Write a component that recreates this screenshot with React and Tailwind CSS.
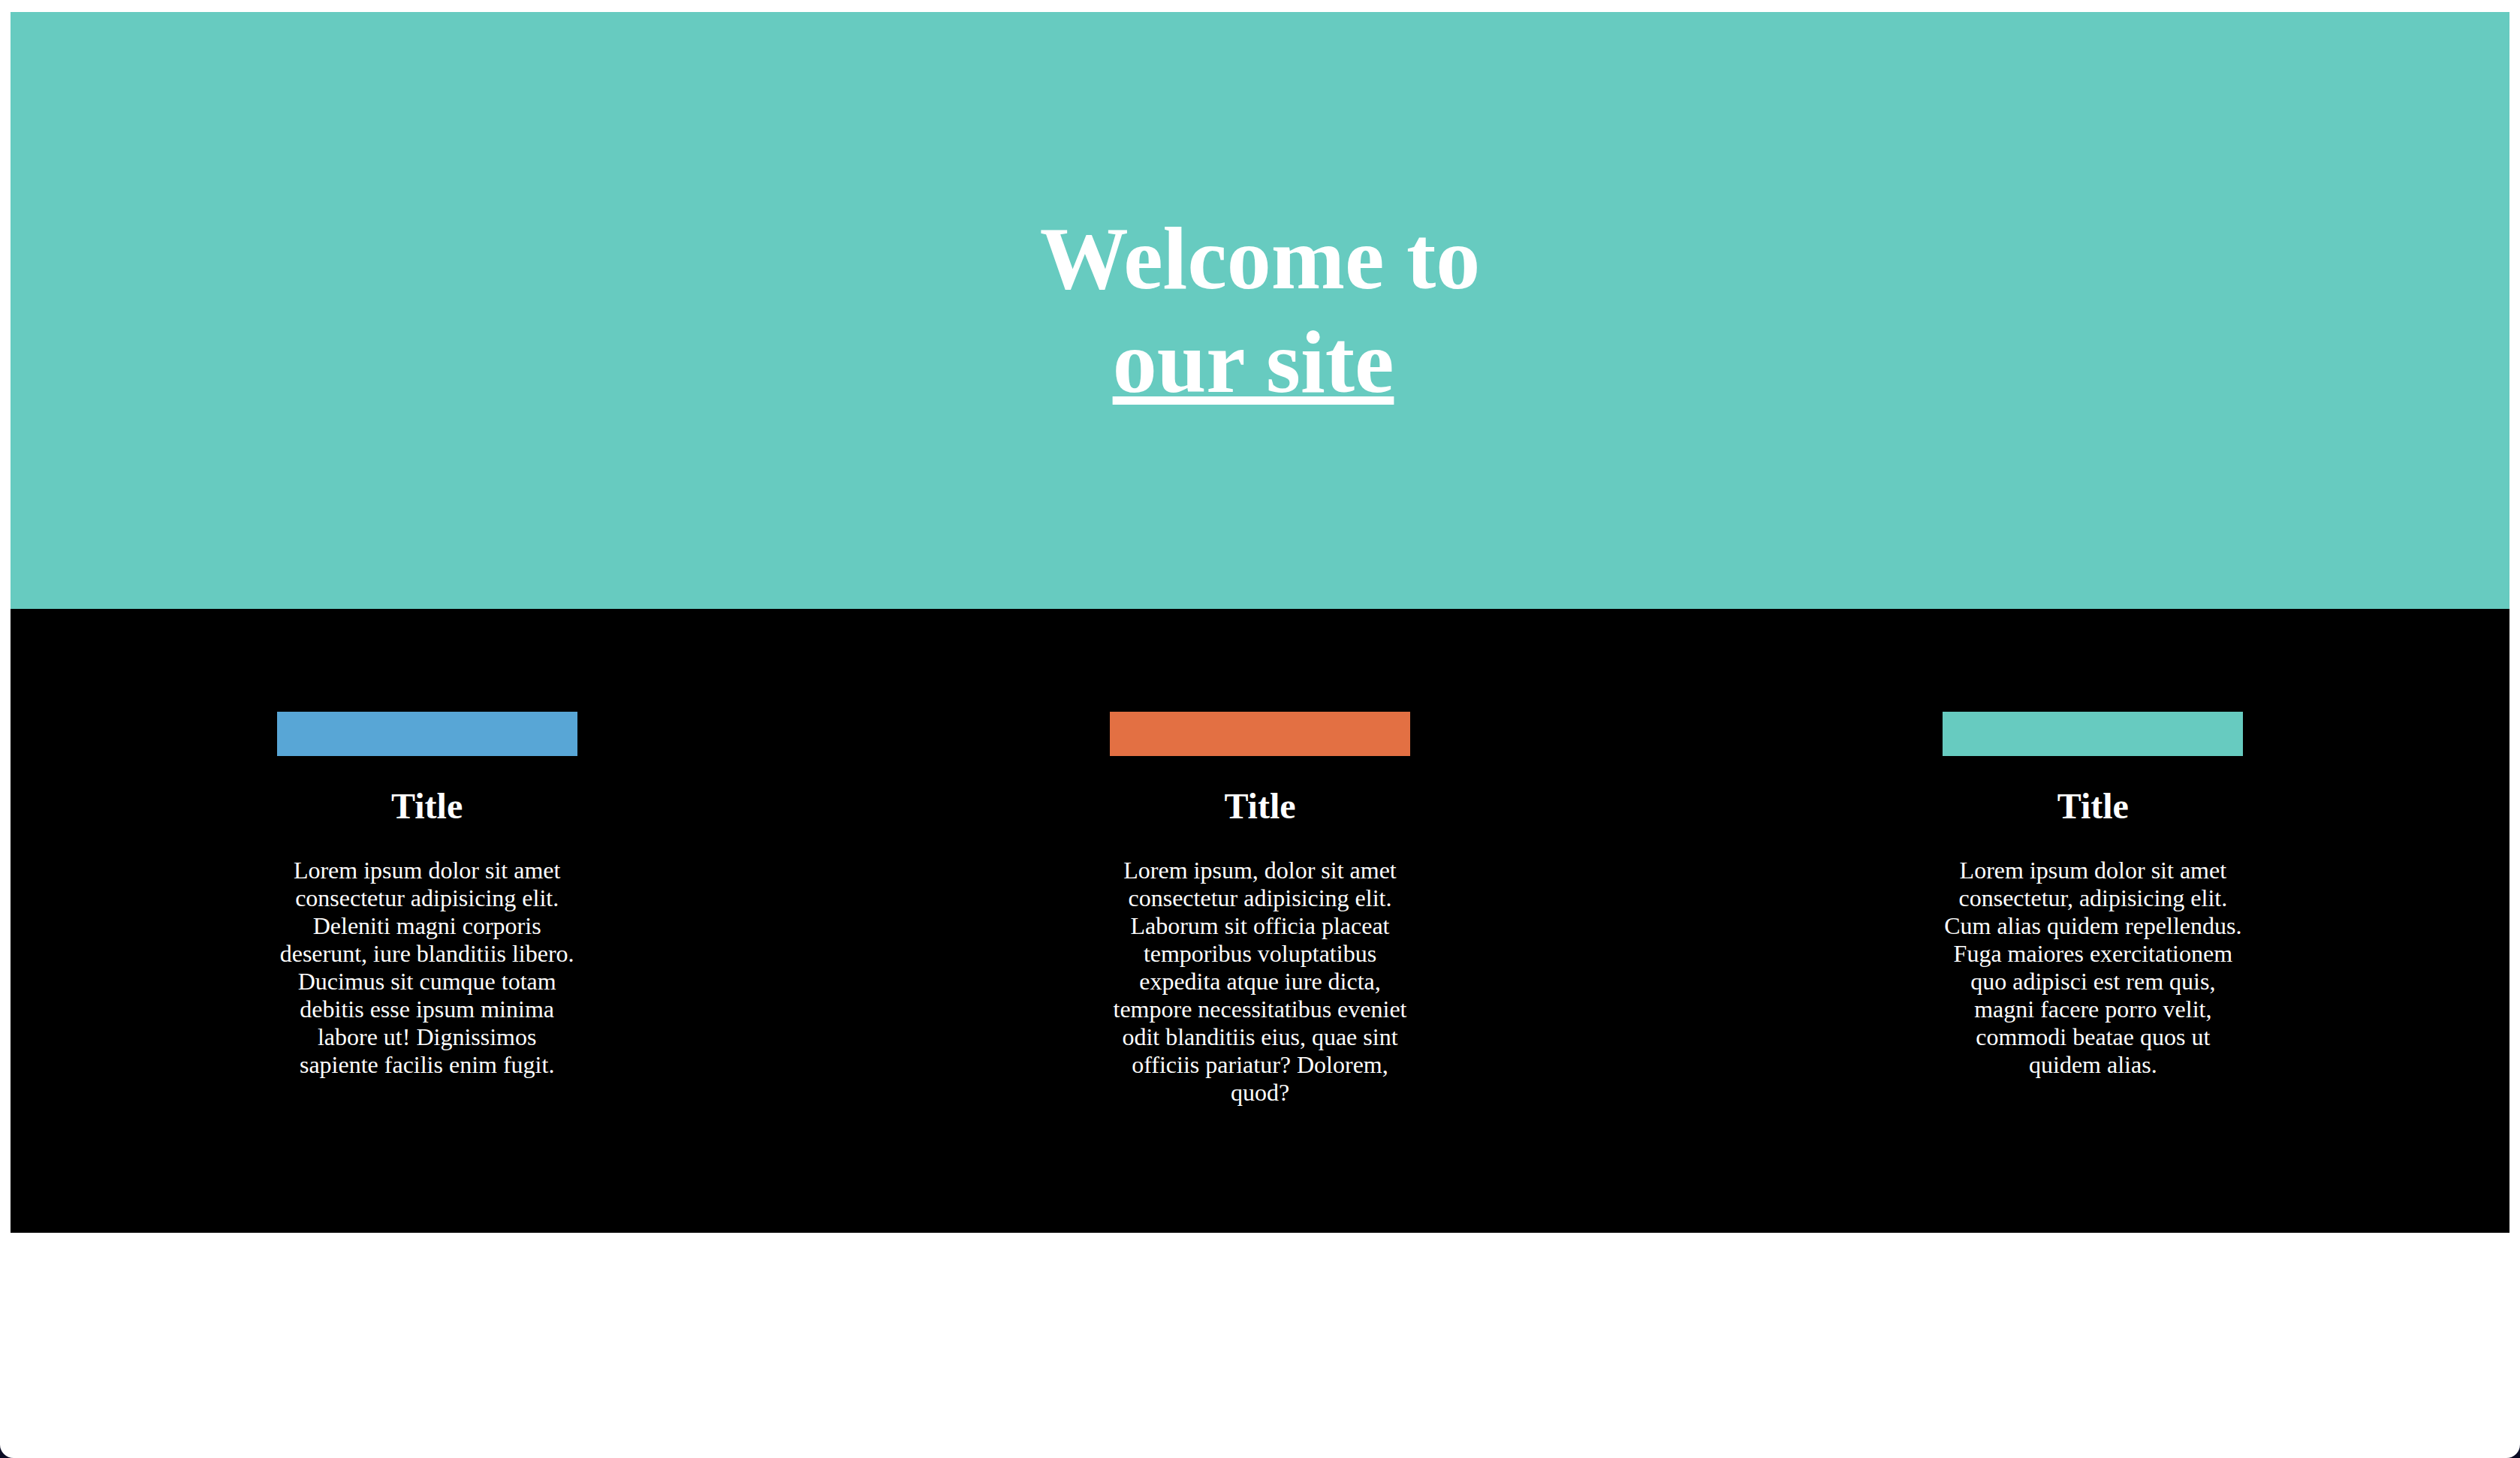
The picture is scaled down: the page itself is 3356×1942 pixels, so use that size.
const CARDS = [
  {
    color: 'bg-[#58a6d6]',
    text: 'Lorem ipsum dolor sit amet consectetur adipisicing elit. Deleniti magni corporis deserunt, iure blanditiis libero. Ducimus sit cumque totam debitis esse ipsum minima labore ut! Dignissimos sapiente facilis enim fugit.',
  },
  {
    color: 'bg-[#e37043]',
    text: 'Lorem ipsum, dolor sit amet consectetur adipisicing elit. Laborum sit officia placeat temporibus voluptatibus expedita atque iure dicta, tempore necessitatibus eveniet odit blanditiis eius, quae sint officiis pariatur? Dolorem, quod?',
  },
  {
    color: 'bg-[#67cbc0]',
    text: 'Lorem ipsum dolor sit amet consectetur, adipisicing elit. Cum alias quidem repellendus. Fuga maiores exercitationem quo adipisci est rem quis, magni facere porro velit, commodi beatae quos ut quidem alias.',
  },
]

function Card({ color, text }) {
  return (
    <div className="flex justify-center">
      <div className="w-[400px] flex flex-col items-center text-center">
        <div className={`w-[400px] h-[59px] ${color}`} />
        <h2 className="mt-[39px] text-[48px] font-bold leading-[normal]">Title</h2>
        <p className="mt-[40px] text-[32px] leading-[normal]">{text}</p>
      </div>
    </div>
  )
}

export default function App() {
  return (
    <div className="bg-[#0b0b24] min-h-[1942px]">
      <div
        className="h-[1942px] bg-white rounded-b-[18px] pt-[16px] px-[14px] text-white"
        style={{ fontFamily: '"Liberation Serif", "Times New Roman", serif' }}
      >
        {/* Hero */}
        <section className="h-[795px] bg-[#67cbc0] flex items-center justify-center">
          <h1 className="text-[118px] font-bold leading-[138px] text-center">
            <span className="block">Welcome to</span>
            <span className="block pr-[18px]">
              <span className="underline decoration-[11px] underline-offset-[6px]">our site</span>
            </span>
          </h1>
        </section>

        {/* Features */}
        <section className="h-[831px] bg-black pt-[137px] grid grid-cols-3 items-start">
          {CARDS.map((c, i) => (
            <Card key={i} {...c} />
          ))}
        </section>
      </div>
    </div>
  )
}
